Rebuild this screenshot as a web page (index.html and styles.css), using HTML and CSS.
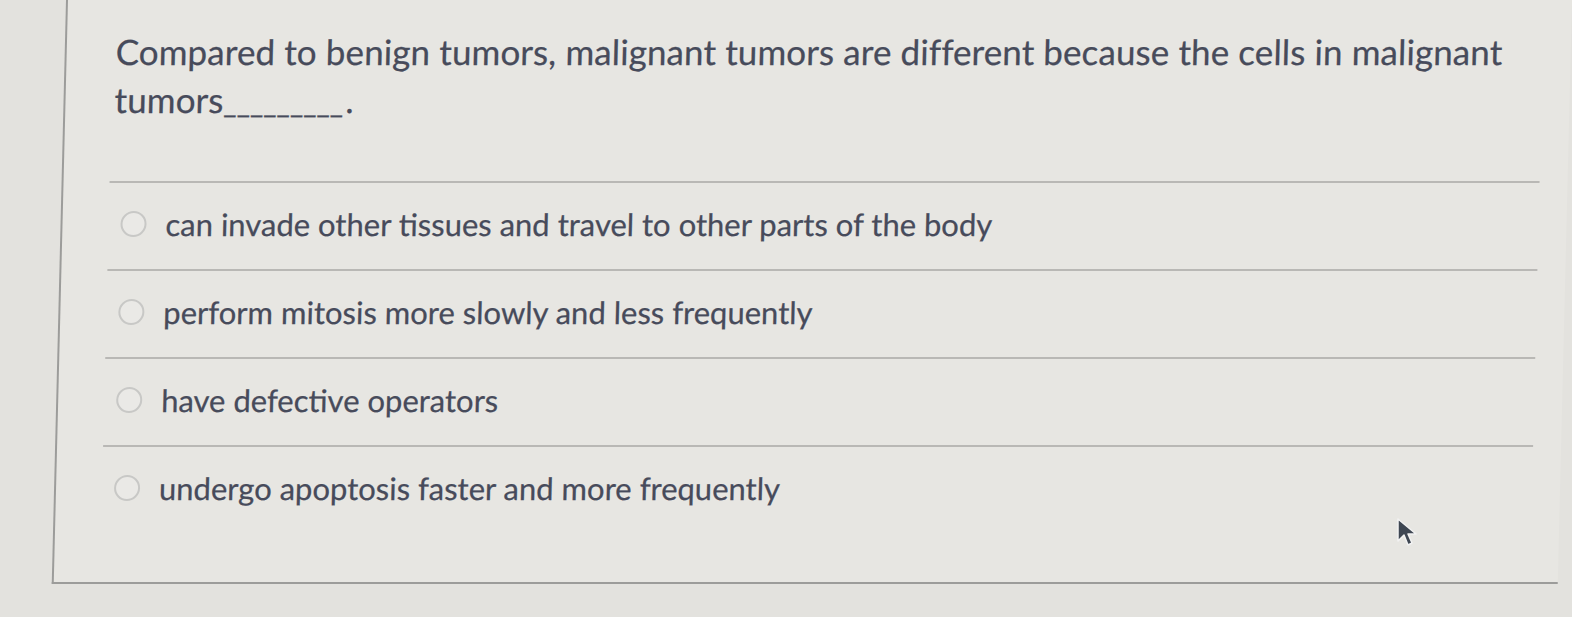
FILE: index.html
```html
<!DOCTYPE html>
<html>
<head>
<meta charset="utf-8">
<link rel="stylesheet" href="styles.css">
</head>
<body>
<div class="page">
  <div class="card">
    <p class="question">Compared to benign tumors, malignant tumors are different because the cells in malignant tumors<span class="blank">_________</span>.</p>
    <ul class="options">
      <li class="option"><span class="radio"></span><span class="label">can invade other tissues and travel to other parts of the body</span></li>
      <li class="option"><span class="radio"></span><span class="label">perform mitosis more slowly and less frequently</span></li>
      <li class="option"><span class="radio"></span><span class="label">have defective operators</span></li>
      <li class="option"><span class="radio"></span><span class="label">undergo apoptosis faster and more frequently</span></li>
    </ul>
  </div>
  <svg class="cursor" width="28" height="34" viewBox="0 0 28 34">
    <path d="M2 2 L2 24 L8 18 L12 28 L16 26 L12 17 L20 17 Z" fill="#3e4652" stroke="#f2f2f2" stroke-width="1.5" stroke-linejoin="round"/>
  </svg>
</div>
</body>
</html>
```
FILE: styles.css
```css
html, body {
  margin: 0;
  padding: 0;
}
body {
  background: #e3e2de;
  width: 1572px;
  height: 617px;
  overflow: hidden;
  font-family: Lato, "Open Sans", sans-serif;
}
.page {
  position: relative;
  width: 1572px;
  height: 617px;
}
.card {
  margin-left: 66px;
  height: 584px;
  box-sizing: border-box;
  border-left: 2px solid #9c9c9a;
  border-bottom: 2px solid #9c9c9a;
  background: #e7e6e2;
  padding: 27px 28px 0 49px;
  transform: skewX(-1.4deg);
  transform-origin: top left;
}
.question {
  margin: 0;
  font-size: 35px;
  line-height: 48px;
  color: #474b5b;
  letter-spacing: 0.1px;
  -webkit-text-stroke: 0.25px #474b5b;
}
.blank {
  font-size: 29px;
  line-height: 0;
  letter-spacing: 0;
  margin-right: 2px;
}
.options {
  list-style: none;
  margin: 58px 0 0 -3px;
  padding: 0;
}
.option {
  display: flex;
  align-items: center;
  height: 88px;
  border-top: 2px solid #b9b8b5;
  box-sizing: border-box;
  padding-left: 12px;
  padding-bottom: 4px;
}
.radio {
  width: 26px;
  height: 26px;
  border: 2px solid #c8c8c6;
  border-radius: 50%;
  box-sizing: border-box;
  background: #eae9e6;
  flex: none;
  margin-right: 19px;
}
.label {
  font-size: 31px;
  color: #474b5b;
  line-height: 36px;
  -webkit-text-stroke: 0.25px #474b5b;
}
.cursor {
  position: absolute;
  left: 1396px;
  top: 517px;
}
```
